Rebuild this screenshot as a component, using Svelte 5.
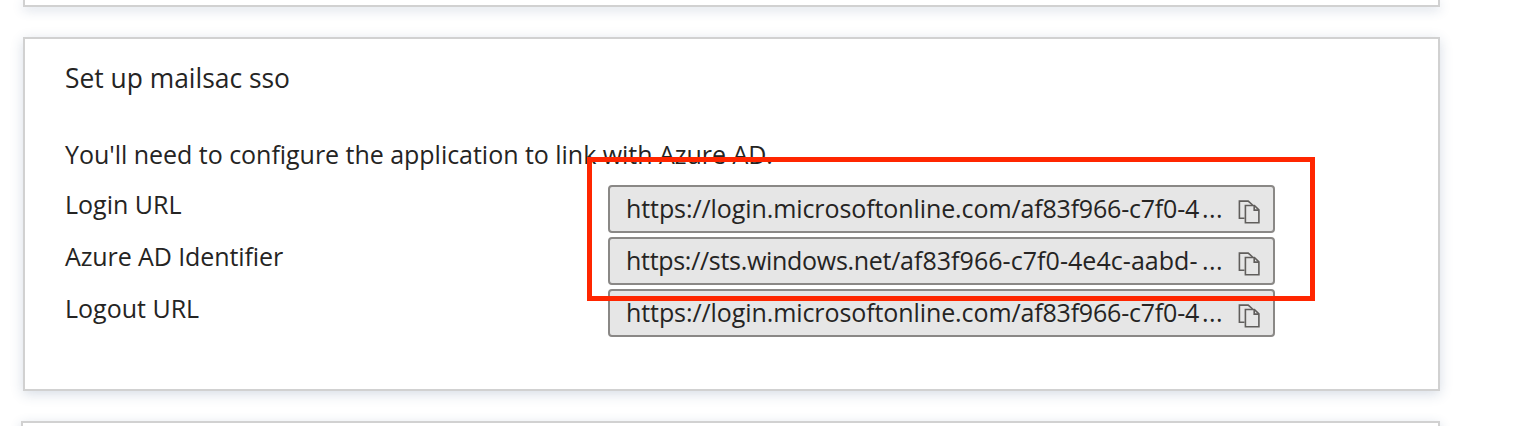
<script>
  const login = { host: 'https://login.microsoftonline.com/', id: 'af83f966-c7f0-4' };
  const rows = [
    { label: 'Login URL', kind: 'login', ...login },
    { label: 'Azure AD Identifier', kind: 'sts', host: 'https://sts.windows.net/', id: 'af83f966-c7f0-4e4c-aabd-' },
    { label: 'Logout URL', kind: 'login', ...login },
  ];
</script>

<main class="page">
  <section class="card previous"></section>
  <section class="card setup">
    <h2>Set up mailsac sso</h2>
    <p>You'll need to configure the application to link with Azure AD.</p>
    <div class="rows">
      {#each rows as row}
        <div class="row {row.kind}">
          <div class="label">{row.label}</div>
          <div class="field">
            <div class="value"><span class="host">{row.host}</span><span class="id">{row.id}</span></div>
            <div class="dots">...</div>
            <svg class="copy" viewBox="0 0 22 24" width="22" height="24" fill="none" stroke="#605e5c" stroke-width="1.6">
              <path d="M6.5 18.2H1.4V1.1H10.2L14.6 5" />
              <path d="M7.4 5.5H16.4L20.9 9.9V22.7H7.4Z" />
              <path d="M16.2 5.5V10.1H20.9" />
            </svg>
          </div>
        </div>
      {/each}
    </div>
    <div class="highlight"></div>
  </section>
  <section class="card next"></section>
</main>

<style>
  :global(body) { background: #fff; }
  .page {
    box-sizing: border-box;
    width: 1520px;
    height: 426px;
    overflow: hidden;
    padding-right: 80px;
    display: flex;
    flex-direction: column;
    font-family: "Open Sans", "Noto Sans", sans-serif;
    font-size: 25px;
    color: #252423;
  }
  .card {
    box-sizing: border-box;
    flex: none;
    margin-left: 23px;
    border: 2px solid #d1d1d1;
    background: #fff;
    box-shadow: 0 3px 12px rgba(50, 80, 125, 0.2);
  }
  .previous { height: 7px; border-top: 0; }
  .setup { position: relative; height: 354px; margin-top: 30px; padding: 22px 40px 0; }
  .next { height: 30px; margin-top: 30px; margin-left: 21px; }
  h2, p { margin: 0; font-weight: 400; white-space: nowrap; }
  h2 { height: 34px; line-height: 34px; font-size: 26.4px; }
  p { height: 34px; line-height: 34px; margin-top: 42px; letter-spacing: -0.03px; }
  .rows { display: flex; flex-direction: column; gap: 4px; margin-top: 14px; }
  .row { display: flex; height: 48px; }
  .label { width: 543px; line-height: 38px; }
  .sts .label { letter-spacing: -0.1px; }
  .field {
    box-sizing: border-box;
    width: 667px;
    display: flex;
    padding: 0 13px 0 16px;
    border: 2px solid #8a8886;
    border-radius: 4px;
    background: #e6e6e6;
    line-height: 42px;
    white-space: nowrap;
  }
  .value { width: 576px; }
  .login .host { letter-spacing: -0.09px; }
  .login .id { letter-spacing: -0.2px; }
  .sts .host { letter-spacing: -0.3px; }
  .sts .id { letter-spacing: 0.05px; }
  .dots { width: 36px; letter-spacing: 0.4px; }
  .copy { display: block; margin-top: 13px; }
  .highlight {
    position: absolute;
    box-sizing: border-box;
    left: 562px;
    top: 118px;
    width: 728px;
    height: 144px;
    border: 5px solid #ff2600;
  }
</style>
